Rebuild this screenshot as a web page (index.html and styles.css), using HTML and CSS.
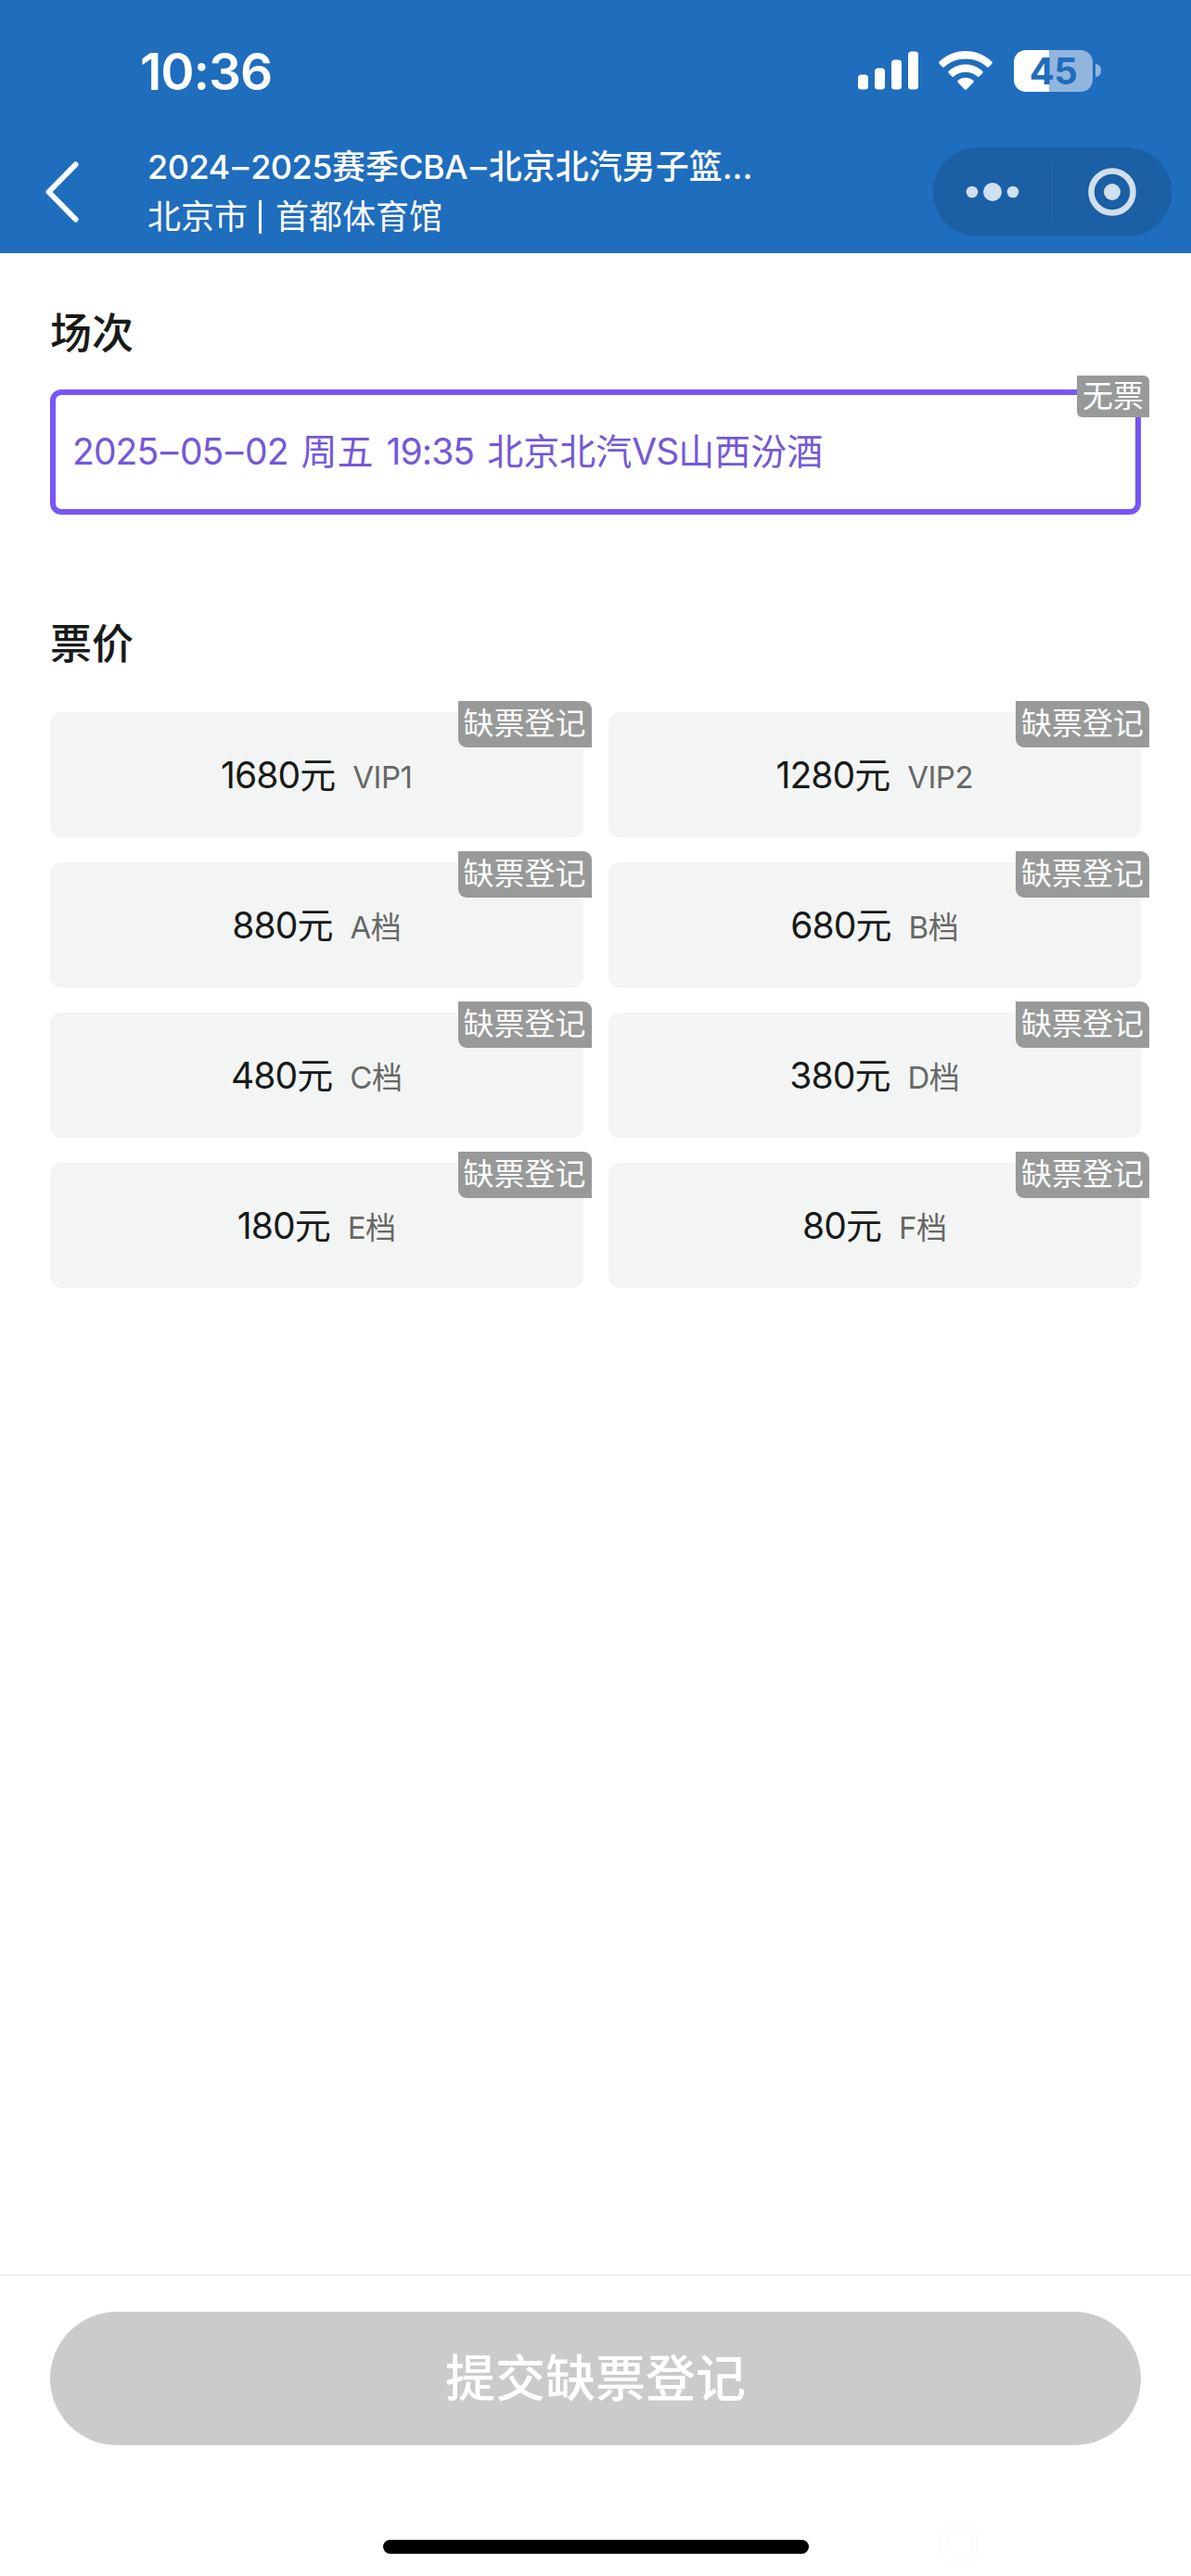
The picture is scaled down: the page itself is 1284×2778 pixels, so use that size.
FILE: index.html
```html
<!DOCTYPE html>
<html lang="zh-CN">
<head>
    <meta charset="UTF-8">
    <meta name="viewport" content="width=device-width, initial-scale=1.0">
    <title>选择场次</title>
    <link rel="stylesheet" href="styles.css">
</head>
<body>
    <header class="header">
        <div class="status-bar">
            <div class="time">10:36</div>
            <div class="status-icons">
                <svg class="signal" width="65" height="42" viewBox="0 0 65 42" fill="#fff">
                    <rect x="0" y="25.5" width="11" height="16" rx="3.5"/>
                    <rect x="18" y="18.5" width="11" height="23" rx="3.5"/>
                    <rect x="36" y="9.5" width="11" height="32" rx="3.5"/>
                    <rect x="54" y="0.5" width="11" height="41" rx="3.5"/>
                </svg>
                <svg class="wifi" width="58" height="42" viewBox="0 0 58 42" fill="#fff">
                    <path d="M29 0C40 0 50 4.400 57.300 11.500Q58.300 12.600 57.300 13.700L54 17.200Q53 18.100 52 17.200C46 11.700 38 8.500 29 8.500S12 11.700 6 17.200Q5 18.100 4 17.200L.7 13.700Q-.3 12.600 .7 11.500C8 4.400 18 0 29 0Z"/>
                    <path d="M29 14.500C36 14.500 42.500 17.200 47.200 21.700Q48.200 22.800 47.200 23.900L43.700 27.500Q42.700 28.400 41.700 27.500C38.300 24.500 34 22.800 29 22.800S19.700 24.500 16.300 27.500Q15.300 28.400 14.300 27.500L10.800 23.900Q9.800 22.800 10.800 21.700C15.500 17.200 22 14.500 29 14.500Z"/>
                    <path d="M29 28.800C32.200 28.800 35 29.900 37.200 31.700Q38.300 32.800 37.200 33.900L30.200 41.200Q29 42.300 27.800 41.200L20.800 33.900Q19.700 32.800 20.800 31.700C23 29.900 25.800 28.800 29 28.800Z"/>
                </svg>
                <div class="battery">
                    <div class="battery-body">45</div>
                    <div class="battery-cap"></div>
                </div>
            </div>
        </div>
        <div class="nav-bar">
            <svg class="back" width="40" height="68" viewBox="0 0 40 68">
                <path d="M34.500 4.500L5.500 34L34.500 63.500" fill="none" stroke="#fff" stroke-width="6" stroke-linecap="round" stroke-linejoin="round"/>
            </svg>
            <div class="nav-title">
                <div class="title"><span class="num">2024<span class="dash">–</span>2025</span>赛季<span class="num">CBA<span class="dash">–</span></span>北京北汽男子篮...</div>
                <div class="venue"><span>北京市</span><i class="bar"></i><span>首都体育馆</span></div>
            </div>
            <div class="capsule">
                <svg class="more" width="58" height="22" viewBox="0 0 58 22" fill="#d1dfee">
                    <circle cx="7" cy="11" r="6.300"/>
                    <circle cx="29" cy="11" r="10"/>
                    <circle cx="51" cy="11" r="6.300"/>
                </svg>
                <div class="capsule-line"></div>
                <svg class="close" width="52" height="52" viewBox="0 0 52 52">
                    <circle cx="26" cy="26" r="22.500" fill="none" stroke="#d1dfee" stroke-width="6.500"/>
                    <circle cx="26" cy="26" r="9" fill="#d1dfee"/>
                </svg>
            </div>
        </div>
    </header>

    <main class="content">
        <h2>场次</h2>
        <div class="session active">
            <span class="num">2025<span class="dash">–</span>05<span class="dash">–</span>02</span> 周五 <span class="num">19:35</span> 北京北汽<span class="num">VS</span>山西汾酒
            <span class="tag tag-small">无票</span>
        </div>

        <h2 class="price-heading">票价</h2>
        <div class="price-list">
            <div class="price"><b><span class="num">1680</span>元</b><i>VIP1</i><em class="tag">缺票登记</em></div>
            <div class="price"><b><span class="num">1280</span>元</b><i>VIP2</i><em class="tag">缺票登记</em></div>
            <div class="price"><b><span class="num">880</span>元</b><i>A档</i><em class="tag">缺票登记</em></div>
            <div class="price"><b><span class="num">680</span>元</b><i>B档</i><em class="tag">缺票登记</em></div>
            <div class="price"><b><span class="num">480</span>元</b><i>C档</i><em class="tag">缺票登记</em></div>
            <div class="price"><b><span class="num">380</span>元</b><i>D档</i><em class="tag">缺票登记</em></div>
            <div class="price"><b><span class="num">180</span>元</b><i>E档</i><em class="tag">缺票登记</em></div>
            <div class="price"><b><span class="num">80</span>元</b><i>F档</i><em class="tag">缺票登记</em></div>
        </div>
    </main>

    <footer class="footer">
        <button class="submit">提交缺票登记</button>
        <div class="home-indicator"></div>
        <svg class="watermark" width="40" height="40" viewBox="0 0 40 40" fill="none" stroke="#fcfcfc" stroke-width="2">
            <rect x="1" y="1" width="38" height="38" rx="7"/>
            <path d="M7 6H33V24Q33 30 20 35Q7 30 7 24Z"/>
        </svg>
    </footer>
</body>
</html>
```
FILE: styles.css
```css
* {
    box-sizing: border-box;
}
body {
    margin: 0;
    height: 2778px;
    display: flex;
    flex-direction: column;
    background-color: #fff;
    color: #181a19;
    font-family: Inter, "Noto Sans CJK SC", sans-serif;
}
.num {
    letter-spacing: -0.9px;
}
.dash {
    margin: 0 2.5px;
}

/* header */
.header {
    height: 273px;
    background-color: #1f6dbd;
    color: #fff;
}
.status-bar {
    height: 152px;
    padding: 0 97px 0 151px;
    display: flex;
    align-items: center;
    justify-content: space-between;
}
.time {
    font-size: 55px;
    font-weight: 600;
    line-height: 60px;
    letter-spacing: -1px;
    padding-top: 2px;
}
.status-icons {
    display: flex;
    align-items: center;
}
.wifi {
    margin: 0 23px 0 22px;
}
.battery {
    display: flex;
    align-items: center;
    gap: 3px;
}
.battery-body {
    width: 85px;
    height: 45px;
    border-radius: 13px;
    background: linear-gradient(90deg, #fff 38px, #92b5de 38px);
    color: #1f6dbd;
    font-size: 40px;
    font-weight: 700;
    line-height: 45px;
    letter-spacing: -0.5px;
    text-align: center;
}
.battery-cap {
    width: 6px;
    height: 14px;
    border-radius: 0 6px 6px 0;
    background-color: #92b5de;
}
.nav-bar {
    height: 109px;
    padding: 0 21px 0 47px;
    display: flex;
    align-items: center;
}
.nav-title {
    flex: 1;
    margin-left: 72px;
    font-size: 36px;
}
.title {
    height: 54px;
    line-height: 54px;
    font-weight: 500;
    white-space: nowrap;
}
.title .num {
    letter-spacing: -0.5px;
}
.venue {
    height: 54px;
    line-height: 54px;
    display: flex;
    align-items: center;
}
.bar {
    width: 3px;
    height: 36px;
    margin: 0 15px 0 12px;
    background-color: #fff;
}
.capsule {
    width: 257px;
    height: 96px;
    border-radius: 48px;
    background-color: #1b5fa4;
    display: flex;
    align-items: center;
    padding: 0 38px 0 35px;
}
.capsule-line {
    width: 1px;
    height: 62px;
    margin: 0 38px 0 35px;
    background-color: #2c6bae;
}

/* content */
.content {
    flex: 1;
    padding: 54px 54px 0;
}
h2 {
    margin: 0;
    height: 66px;
    line-height: 66px;
    font-size: 45px;
    font-weight: 500;
}
.session {
    position: relative;
    height: 135px;
    margin-top: 27px;
    padding-left: 18px;
    line-height: 121px;
    font-size: 39px;
    word-spacing: 3px;
    white-space: nowrap;
    border: 6px solid #7856f6;
    border-radius: 12px;
    color: #7458d8;
}
.price-heading {
    margin-top: 107px;
}
.price-list {
    display: grid;
    grid-template-columns: 1fr 1fr;
    gap: 27px;
    margin-top: 40px;
}
.price {
    position: relative;
    height: 135px;
    display: flex;
    align-items: baseline;
    justify-content: center;
    line-height: 135px;
    border-radius: 12px;
    background-color: #f3f5f4;
}
.price b {
    font-size: 39px;
    font-weight: 400;
}
.price i {
    margin-left: 18px;
    font-size: 33px;
    font-style: normal;
    letter-spacing: -0.5px;
    color: #666867;
}
.tag {
    position: absolute;
    top: -12px;
    right: -9px;
    width: 144px;
    height: 50px;
    line-height: 49px;
    font-size: 33px;
    font-style: normal;
    text-align: center;
    color: #fff;
    background-color: #989a99;
    border-radius: 0 9px 0 9px;
}
.tag-small {
    top: -21px;
    right: -15px;
    width: 78px;
    height: 45px;
    line-height: 44px;
    border-radius: 0 6px 0 6px;
}

/* footer */
.footer {
    position: relative;
    height: 325px;
    padding: 39px 54px 0;
    border-top: 1px solid #e3e4e4;
}
.submit {
    display: block;
    width: 100%;
    height: 144px;
    padding: 0 0 8px;
    border: none;
    border-radius: 72px;
    background-color: #cacccb;
    color: #fff;
    font-family: inherit;
    font-size: 54px;
    font-weight: 500;
}
.home-indicator {
    width: 459px;
    height: 15px;
    margin: 102px auto 0;
    border-radius: 8px;
    background-color: #000;
}
.watermark {
    position: absolute;
    right: 230px;
    bottom: 14px;
}
```
